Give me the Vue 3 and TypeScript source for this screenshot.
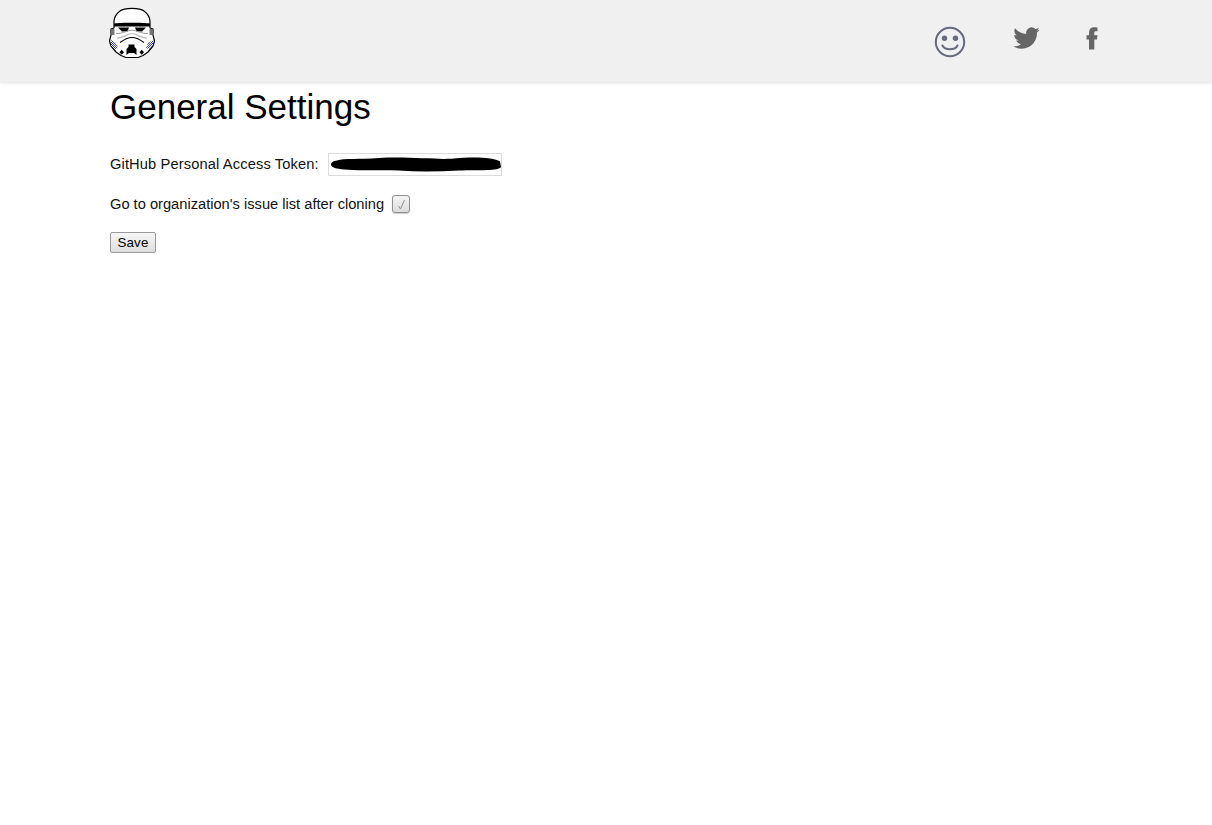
<script setup lang="ts">
</script>

<template>
  <div class="page">
    <header class="bar">
      <div class="bar-inner">
        <a class="logo" aria-label="home">
          <svg width="48" height="52" viewBox="0 0 48 52">
            <defs>
              <pattern id="chk" width="2" height="2" patternUnits="userSpaceOnUse">
                <rect width="2" height="2" fill="#fff"/>
                <rect width="1" height="1" fill="#3c3cb4"/>
                <rect x="1" y="1" width="1" height="1" fill="#3c3cb4"/>
              </pattern>
            </defs>
            <path d="M24 1.300C20 1.300 15 1.500 12 4 8 7 6 10.500 6 15V21L3 22V28L1.500 34 3 39 8 45 13 48.500 18 50.500H30L35 48.500 40 45 45 39 46.500 34 45 28V22L42 21V15C42 10.500 40 7 36 4 33 1.500 28 1.300 24 1.300Z" fill="#fff" stroke="#000" stroke-width="1.200" stroke-linejoin="round"/>
            <path d="M3.500 22h3v6h-3ZM41.500 22h3v6h-3Z" fill="#777"/>
            <path d="M6 16.500C13 15.500 35 15.500 42 16.500V19.500H6Z" fill="#000"/>
            <path d="M10 20.500h11L19.500 24.500H14ZM27 20.500h11L34 24.500H28.500Z" fill="#000"/>
            <path d="M8 26.500C14 27 19 23.500 24 23 29 23.500 34 27 40 26.500" fill="none" stroke="#999" stroke-width="1"/>
            <path d="M9 31C15 31 20 26.500 24 26.500 28 26.500 33 31 39 31" fill="none" stroke="#bbb" stroke-width="1.200"/>
            <path d="M12 35.500C16 32.500 20 30.500 24 30.500 28 30.500 32 32.500 36 35.500" fill="none" stroke="#000" stroke-width="1.200"/>
            <path d="M18.500 48V42L20.500 40V37.500H26.500V40L28.500 42V48L26 46H21Z" fill="#000"/>
            <path d="M13.700 42.800l2.300 2.500-2.300 2.500-2.300-2.500ZM33.700 42.800l2.300 2.500-2.300 2.500-2.300-2.500Z" fill="#000"/>
            <path d="M3 33L8 36 10 41 7 42 3 38Z" fill="url(#chk)"/>
            <path d="M45 33L40 36 38 41 41 42 45 38Z" fill="url(#chk)"/>
          </svg>
        </a>
        <nav class="icons">
          <svg class="smile" width="32" height="32" viewBox="0 0 32 32">
            <circle cx="16" cy="16" r="14.200" fill="none" stroke="#666a7c" stroke-width="2"/>
            <circle cx="10.500" cy="12.300" r="2.700" fill="#666a7c"/>
            <circle cx="21.500" cy="12.300" r="2.700" fill="#666a7c"/>
            <path d="M8.500 19.500C11 24.500 21 24.500 23.500 19.500" fill="none" stroke="#666a7c" stroke-width="2" stroke-linecap="round"/>
          </svg>
          <svg class="twitter" width="27" height="22" viewBox="0 0 24 20">
            <path d="M23.950 2.570a9.830 9.830 0 0 1-2.820.770A4.930 4.930 0 0 0 23.290.630a9.860 9.860 0 0 1-3.120 1.190 4.920 4.920 0 0 0-8.380 4.480A13.960 13.960 0 0 1 1.640 1.160a4.920 4.920 0 0 0 1.520 6.560 4.900 4.900 0 0 1-2.230-.610v.06a4.920 4.920 0 0 0 3.950 4.820 4.950 4.950 0 0 1-2.220.090 4.930 4.930 0 0 0 4.600 3.420A9.870 9.870 0 0 1 0 17.530 13.940 13.940 0 0 0 7.550 19.740c9.060 0 14-7.500 14-14l-.02-.640a10 10 0 0 0 2.420-2.530Z" fill="#666"/>
          </svg>
          <svg class="facebook" width="12" height="23" viewBox="0 0 12 23">
            <path d="M3 22.500V12.500H.5V8.300H3V5.500C3 2 5 .3 8 .3c1.500 0 2.800.1 3.500.2v3.800H9.600C8.500 4.300 8.300 5 8.300 6v2.300h3.200l-.5 4.200H8.300V22.500Z" fill="#666"/>
          </svg>
        </nav>
      </div>
    </header>
    <main class="content">
      <h1>General Settings</h1>
      <div class="row token-row">
        <label class="token-label" for="token">GitHub Personal Access Token:</label>
        <div class="token-box" id="token">
          <svg width="172" height="21" viewBox="0 0 172 21">
            <path d="M2 10.500C2 8 5 7 8 6.500 15 4 30 5.500 50 4 80 2.500 110 6 125 4.500 145 2.500 165 3.500 171 7.500L172 13C170 17 150 16 130 16.500 110 17.500 90 18 70 16.500 50 15.500 30 17 15 15.500 8 14.500 2 14 2 10.500Z" fill="#000"/>
          </svg>
        </div>
      </div>
      <div class="row check-row">
        <label for="goto">Go to organization's issue list after cloning</label>
        <span class="check" id="goto">
          <svg width="13" height="13" viewBox="0 0 13 13">
            <path d="M3.500 8l2 3 4-9" fill="none" stroke="#8a9099" stroke-width="1"/>
          </svg>
        </span>
      </div>
      <button class="save" type="button">Save</button>
    </main>
  </div>
</template>

<style scoped>
.page {
  min-height: 825px;
  background: #fff;
  font-family: "Liberation Sans", Arial, sans-serif;
  color: #000;
}
.bar {
  height: 82px;
  background: #f0f0f0;
  box-shadow: 0 1px 3px rgba(0, 0, 0, 0.12);
}
.bar-inner {
  width: 992px;
  margin-left: 108px;
  display: flex;
  justify-content: space-between;
  align-items: flex-start;
}
.logo {
  display: block;
  margin-top: 7px;
  height: 52px;
}
.icons {
  display: flex;
  align-items: flex-start;
}
.smile {
  margin-top: 26px;
  margin-right: 47px;
}
.twitter {
  margin-top: 27px;
  margin-right: 46px;
}
.facebook {
  margin-top: 27px;
  margin-right: 2px;
}
.content {
  padding: 0 110px;
}
h1 {
  margin: 0;
  padding-top: 5px;
  font-size: 35px;
  line-height: 39px;
  font-weight: 400;
}
.row {
  display: flex;
  align-items: center;
  font-size: 14.67px;
  color: #111;
}
.token-row {
  margin-top: 27px;
}
.token-label {
  letter-spacing: 0.13px;
  padding-bottom: 2px;
}
.token-box {
  width: 172px;
  height: 21px;
  margin-left: 9px;
  border: 1px solid #dcdcdc;
  display: flex;
  align-items: center;
}
.check-row {
  margin-top: 19px;
}
.check {
  width: 16px;
  height: 16px;
  margin-left: 8px;
  border: 1px solid #8f8f8f;
  border-radius: 3px;
  background: linear-gradient(#f4f4f4, #dcdcdc);
  box-shadow: 0 1px 1px rgba(0, 0, 0, 0.2);
  display: flex;
  align-items: center;
  justify-content: center;
}
.save {
  display: block;
  margin-top: 19px;
  width: 46px;
  height: 21px;
  padding: 0;
  border: 1px solid #9a9a9a;
  border-radius: 2px;
  background: linear-gradient(#f6f6f6, #dedede);
  font-family: "Liberation Sans", Arial, sans-serif;
  font-size: 13.33px;
  letter-spacing: 0.1px;
  color: #000;
}
</style>
